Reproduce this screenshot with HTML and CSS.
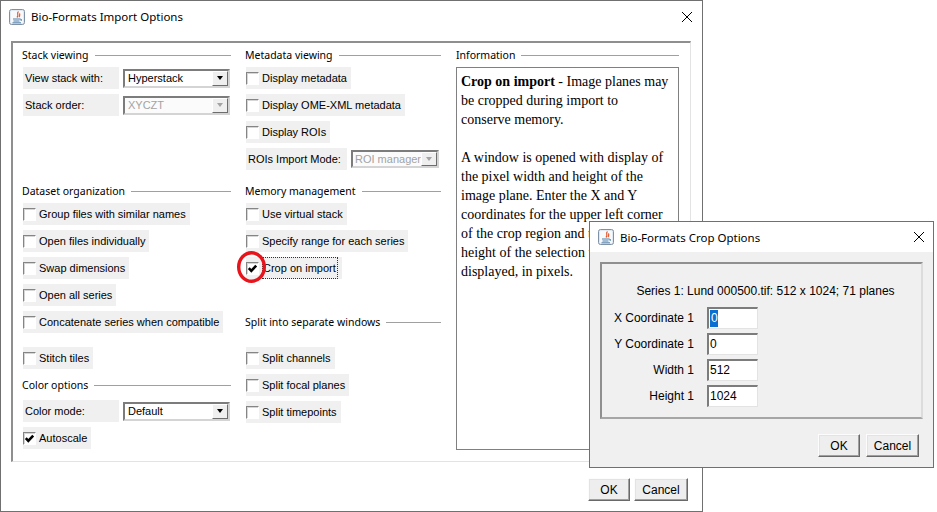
FILE: index.html
```html
<!DOCTYPE html>
<html lang="en">
<head>
  <meta charset="UTF-8" />
  <title>Bio-Formats Import Options</title>
  <link rel="stylesheet" href="styles.css">
</head>
<body>
  <div class="window import-window">
    <div class="titlebar">
      <svg class="java-icon" viewBox="0 0 16 16">
        <rect x="0.5" y="0.5" width="15" height="15" rx="2" fill="#e3e9f0" stroke="#7f91a6"/>
        <rect x="2" y="2" width="12" height="12" rx="1" fill="#f7f9fb"/>
        <path d="M9.5 2.5 C7 4.5 10.5 5.5 8 8.5 M11 4.5 C10 5.5 11.5 6.5 10 8" stroke="#e4572e" stroke-width="1.2" fill="none"/>
        <path d="M4 10 H11 M4.5 12 H10.5 M3.5 13.8 H12" stroke="#4f7fa8" stroke-width="1"/>
        <path d="M11 10 Q13.5 10 12 12" stroke="#4f7fa8" fill="none"/>
      </svg>
      <span class="title">Bio-Formats Import Options</span>
      <svg class="close-x" viewBox="0 0 10 10"><path d="M0 0 L10 10 M10 0 L0 10" stroke="#000" stroke-width="1"/></svg>
    </div>

    <div class="options">
      <div class="column col-stack">
        <div class="group-title">Stack viewing</div>
        <div class="field-row">
          <span class="field-label">View stack with:</span>
          <div class="combo"><span>Hyperstack</span><i class="arrow"></i></div>
        </div>
        <div class="field-row">
          <span class="field-label">Stack order:</span>
          <div class="combo disabled"><span>XYCZT</span><i class="arrow"></i></div>
        </div>

        <div class="group-title t-dataset">Dataset organization</div>
        <label class="check-row"><span class="box"></span>Group files with similar names</label>
        <label class="check-row"><span class="box"></span>Open files individually</label>
        <label class="check-row"><span class="box"></span>Swap dimensions</label>
        <label class="check-row"><span class="box"></span>Open all series</label>
        <label class="check-row"><span class="box"></span>Concatenate series when compatible</label>
        <label class="check-row r-stitch"><span class="box"></span>Stitch tiles</label>

        <div class="group-title t-color">Color options</div>
        <div class="field-row">
          <span class="field-label">Color mode:</span>
          <div class="combo"><span>Default</span><i class="arrow"></i></div>
        </div>
        <label class="check-row"><span class="box"><svg viewBox="0 0 11 11"><path d="M1.8 5.2 L4.3 7.8 L9.2 2.6" stroke="#000" stroke-width="2.6" fill="none"/></svg></span>Autoscale</label>
      </div>

      <div class="column col-meta">
        <div class="group-title">Metadata viewing</div>
        <label class="check-row"><span class="box"></span>Display metadata</label>
        <label class="check-row"><span class="box"></span>Display OME-XML metadata</label>
        <label class="check-row"><span class="box"></span>Display ROIs</label>
        <div class="field-row">
          <span class="field-label roi-label">ROIs Import Mode:</span>
          <div class="combo disabled roi-combo"><span>ROI manager</span><i class="arrow"></i></div>
        </div>

        <div class="group-title t-memory">Memory management</div>
        <label class="check-row"><span class="box"></span>Use virtual stack</label>
        <label class="check-row"><span class="box"></span>Specify range for each series</label>
        <label class="check-row crop-row">
          <span class="box"><svg viewBox="0 0 11 11"><path d="M1.8 5.2 L4.3 7.8 L9.2 2.6" stroke="#000" stroke-width="2.6" fill="none"/></svg></span>
          <span class="focus">Crop on import</span>
          <svg class="marker" width="31" height="34" viewBox="0 0 31 34"><ellipse cx="15.5" cy="17" rx="12.8" ry="14.3" fill="none" stroke="#e8141c" stroke-width="3.4"/></svg>
        </label>

        <div class="group-title t-split">Split into separate windows</div>
        <label class="check-row"><span class="box"></span>Split channels</label>
        <label class="check-row"><span class="box"></span>Split focal planes</label>
        <label class="check-row"><span class="box"></span>Split timepoints</label>
      </div>

      <div class="column col-info">
        <div class="group-title">Information</div>
        <div class="info-box">
          <p><b>Crop on import</b> - Image planes may be cropped during import to conserve memory.</p>
          <p class="second">A window is opened with display of the pixel width and height of the image plane. Enter the X and Y coordinates for the upper left corner of the crop region and the width and height of the selection to be displayed, in pixels.</p>
        </div>
      </div>
    </div>

    <div class="dialog-buttons">
      <button class="btn ok">OK</button>
      <button class="btn cancel">Cancel</button>
    </div>
  </div>

  <div class="window crop-window">
    <div class="titlebar">
      <svg class="java-icon" viewBox="0 0 16 16">
        <rect x="0.5" y="0.5" width="15" height="15" rx="2" fill="#e3e9f0" stroke="#7f91a6"/>
        <rect x="2" y="2" width="12" height="12" rx="1" fill="#f7f9fb"/>
        <path d="M9.5 2.5 C7 4.5 10.5 5.5 8 8.5 M11 4.5 C10 5.5 11.5 6.5 10 8" stroke="#e4572e" stroke-width="1.2" fill="none"/>
        <path d="M4 10 H11 M4.5 12 H10.5 M3.5 13.8 H12" stroke="#4f7fa8" stroke-width="1"/>
        <path d="M11 10 Q13.5 10 12 12" stroke="#4f7fa8" fill="none"/>
      </svg>
      <span class="title">Bio-Formats Crop Options</span>
      <svg class="close-x" viewBox="0 0 10 10"><path d="M0 0 L10 10 M10 0 L0 10" stroke="#000" stroke-width="1"/></svg>
    </div>
    <div class="crop-body">
      <div class="crop-panel">
        <p class="series">Series 1: Lund 000500.tif: 512 x 1024; 71 planes</p>
        <div class="coords">
          <span>X Coordinate 1</span><span class="tf"><span class="sel">0</span></span>
          <span>Y Coordinate 1</span><span class="tf">0</span>
          <span>Width 1</span><span class="tf">512</span>
          <span>Height 1</span><span class="tf">1024</span>
        </div>
      </div>
      <div class="dialog-buttons crop-buttons">
        <button class="btn ok">OK</button>
        <button class="btn cancel">Cancel</button>
      </div>
    </div>
  </div>
</body>
</html>
```

FILE: styles.css
```css
* {
  box-sizing: border-box;
}

html, body {
  margin: 0;
}

body {
  position: relative;
  width: 937px;
  height: 512px;
  overflow: hidden;
  background: #fff;
  font-family: "Liberation Sans", Arial, sans-serif;
  font-size: 11px;
  color: #000;
}

.window {
  border: 1px solid #707070;
}

.import-window {
  width: 703px;
  height: 512px;
  background: #fff;
}

/* title bars */
.titlebar {
  display: flex;
  align-items: center;
  height: 31px;
  padding: 0 10px 0 8px;
  background: #fff;
  font-family: "Noto Sans", sans-serif;
  font-size: 11.5px;
}

.titlebar .title {
  flex: 1;
  margin-left: 6px;
}

.java-icon {
  width: 16px;
  height: 16px;
}

.close-x {
  width: 10px;
  height: 10px;
}

/* main options panel */
.options {
  display: flex;
  width: 680px;
  height: 421px;
  margin: 9px 0 0 10px;
  padding: 4px 0 0 9px;
  border-style: solid;
  border-width: 2px 1px 1px 2px;
  border-color: #8f8f8f #e3e3e3 #e3e3e3 #8f8f8f;
}

.column {
  display: flex;
  flex-direction: column;
  align-items: flex-start;
  gap: 5px;
}

.col-stack {
  width: 209px;
  margin-right: 14px;
}

.col-meta {
  width: 196px;
  margin-right: 15px;
}

.col-info {
  width: 223px;
}

.group-title {
  display: flex;
  align-items: center;
  gap: 6px;
  align-self: stretch;
  height: 16px;
  margin-bottom: -1px;
  font-family: "Noto Sans", sans-serif;
  font-size: 10.5px;
  white-space: nowrap;
}

.group-title::after {
  content: "";
  flex: 1;
  border-top: 1px solid #a0a0a0;
}

.t-dataset { margin-top: 62px; }
.t-color { margin-top: 3px; margin-bottom: 2px; }
.t-memory { margin-top: 8px; }
.t-split { margin-top: 30px; margin-bottom: 12px; }
.r-stitch { margin-top: 9px; }

.check-row {
  position: relative;
  display: flex;
  align-items: center;
  gap: 3px;
  height: 22px;
  margin-left: 1px;
  padding-right: 4px;
  background: #f0f0f0;
  white-space: nowrap;
}

.box {
  display: flex;
  width: 13px;
  height: 13px;
  background: #fff;
  border: 1px solid;
  border-color: #858585 #fff #fff #858585;
  box-shadow: inset 1px 1px 0 #d6d6d6;
}

.box svg {
  width: 11px;
  height: 11px;
}

.focus {
  height: 22px;
  line-height: 20px;
  padding: 0 1px 0 0;
  border: 1px dotted #333;
}

.marker {
  position: absolute;
  left: -10px;
  top: -7px;
}

.field-row {
  display: flex;
  align-items: center;
  gap: 4px;
  margin-left: 1px;
}

.field-label {
  width: 96px;
  height: 22px;
  line-height: 22px;
  padding-left: 2px;
  background: #f0f0f0;
  white-space: nowrap;
}

.roi-label {
  width: 101px;
}

.combo {
  display: flex;
  align-items: center;
  width: 107px;
  height: 19px;
  padding-left: 3px;
  background: #fff;
  border: 2px solid;
  border-color: #7c7c7c #d4d4d4 #d4d4d4 #7c7c7c;
  white-space: nowrap;
}

.combo span {
  flex: 1;
  overflow: hidden;
}

.combo .arrow {
  display: flex;
  flex: none;
  align-items: center;
  justify-content: center;
  width: 16px;
  height: 15px;
  background: #efefef;
  border: 1px solid;
  border-color: #fff #6d6d6d #6d6d6d #fff;
}

.combo .arrow::before {
  content: "";
  border-left: 3.5px solid transparent;
  border-right: 3.5px solid transparent;
  border-top: 4px solid #000;
}

.combo.disabled {
  color: #a3a3a3;
  background: #fbfbfb;
}

.combo.disabled .arrow::before {
  border-top-color: #a3a3a3;
}

.roi-combo {
  width: 88px;
  height: 18px;
  padding-left: 2px;
}

.roi-combo .arrow {
  height: 14px;
}

/* information box */
.info-box {
  width: 223px;
  height: 383px;
  padding: 4px 9px 0 4px;
  border: 1px solid #808080;
  font-family: "Liberation Serif", "Times New Roman", serif;
  font-size: 14px;
  line-height: 19px;
}

.info-box p {
  margin: 0;
}

.info-box p.second {
  margin-top: 19px;
}

/* buttons */
.dialog-buttons {
  display: flex;
  justify-content: flex-end;
  gap: 4px;
  margin: 16px 14px 0 0;
}

.btn {
  height: 23px;
  padding: 0;
  font-family: "Liberation Sans", Arial, sans-serif;
  font-size: 12px;
  color: #000;
  background: #eeeeee;
  border: 1px solid;
  border-color: #fcfcfc #696969 #696969 #fcfcfc;
  box-shadow: inset -1px -1px 0 #a0a0a0, inset 1px 1px 0 #e3e3e3;
}

.btn.ok { width: 42px; }
.btn.cancel { width: 54px; }

/* crop dialog */
.crop-window {
  position: absolute;
  left: 589px;
  top: 221px;
  width: 345px;
  height: 247px;
  background: #f0f0f0;
}

.crop-window .titlebar {
  height: 30px;
  padding-right: 9px;
}

.crop-body {
  padding: 10px 10px 0 10px;
  font-size: 12px;
}

.crop-panel {
  height: 157px;
  padding-top: 20px;
  border: 2px solid;
  border-color: #8f8f8f #dcdcdc #a6a6a6 #8f8f8f;
}

.series {
  margin: 0;
  padding-left: 8px;
  line-height: 14px;
  text-align: center;
}

.coords {
  display: grid;
  grid-template-columns: 92px 51px;
  grid-auto-rows: 22px;
  column-gap: 13px;
  row-gap: 4px;
  align-items: center;
  margin-top: 9px;
}

.coords > span:nth-child(odd) {
  text-align: right;
}

.tf {
  height: 22px;
  padding: 1px 0 0 1px;
  line-height: 17px;
  background: #fff;
  border-style: solid;
  border-width: 2px 1px 1px 2px;
  border-color: #7c7c7c #e3e3e3 #e3e3e3 #7c7c7c;
}

.sel {
  display: inline-block;
  padding: 0 0 0 1px;
  color: #fff;
  background: #0a6fd1;
}

.crop-buttons {
  gap: 6px;
  margin: 15px 4px 0 0;
}

.crop-buttons .btn.cancel {
  width: 53px;
}
```
